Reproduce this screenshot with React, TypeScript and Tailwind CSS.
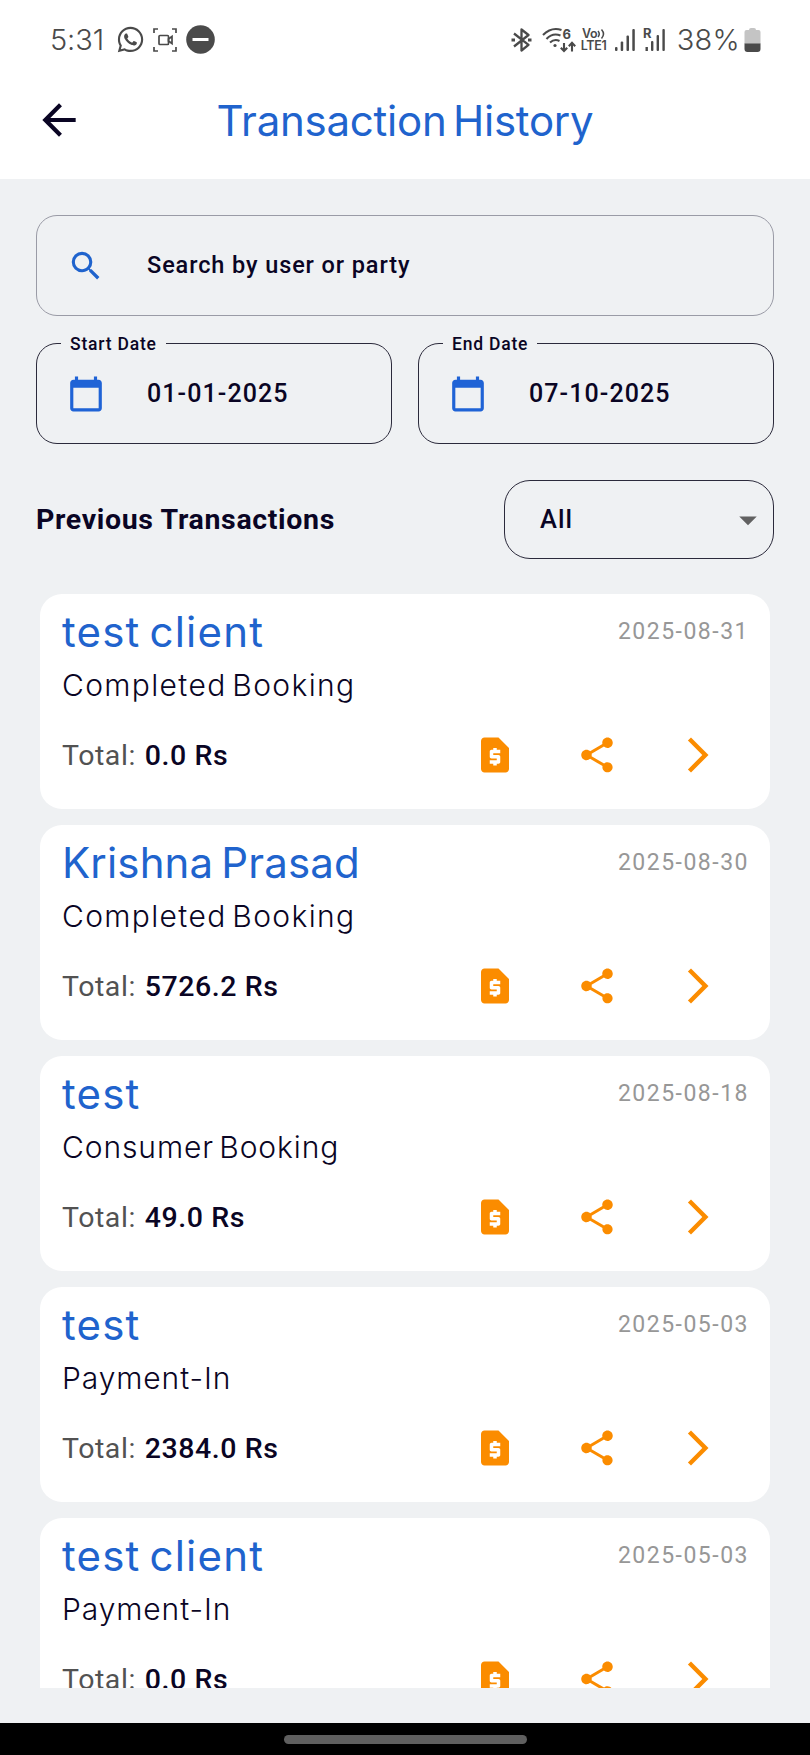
import React from 'react';
import clsx from 'clsx';
import { FaWhatsapp } from 'react-icons/fa';
import {
    MdArrowBack,
    MdArrowDropDown,
    MdArrowForwardIos,
    MdCalendarToday,
    MdRequestPage,
    MdSearch,
    MdShare,
} from 'react-icons/md';

interface ITransaction {
    party: string;
    type: string;
    total: string;
    date: string;
}

const transactions: ITransaction[] = [
    { party: 'test client', type: 'Completed Booking', total: '0.0', date: '2025-08-31' },
    { party: 'Krishna Prasad', type: 'Completed Booking', total: '5726.2', date: '2025-08-30' },
    { party: 'test', type: 'Consumer Booking', total: '49.0', date: '2025-08-18' },
    { party: 'test', type: 'Payment-In', total: '2384.0', date: '2025-05-03' },
    { party: 'test client', type: 'Payment-In', total: '0.0', date: '2025-05-03' },
];

const StatusBar: React.FC = () => (
    <div className="flex h-20 items-center pb-px pl-[50px] pr-[49px] text-[#4a4a4a]">
        <span className="w-[66px] font-[Inter,sans-serif] text-[29px] font-light leading-none tracking-[-0.1px]">5:31</span>
        <FaWhatsapp className="size-[29px]" />
        {/* screen recorder */}
        <svg className="ml-[8px] h-6 w-6" viewBox="0 0 24 24" fill="none" stroke="currentColor" strokeWidth="1.7">
            <path d="M1 5V1h4M19 1h4v4M23 19v4h-4M5 23H1v-4" />
            <rect x="6" y="7.5" width="9.5" height="9" rx="1" />
            <path d="M15.5 11l3.5-2.5v7L15.5 13z" />
        </svg>
        {/* do not disturb */}
        <svg className="ml-[9px] h-[29px] w-[29px]" viewBox="0 0 29 29">
            <circle cx="14.5" cy="14.5" r="14.3" fill="currentColor" />
            <path d="M6.5 14.5h16" stroke="#fff" strokeWidth="3" />
        </svg>

        <svg className="ml-auto h-[24px] w-[21px]" viewBox="0 0 21 24" fill="none" stroke="currentColor" strokeWidth="2.3">
            <path d="M3 5.5L17.5 16.8L10.5 22.5V1.5L17.5 7L3 18.5" strokeLinejoin="round" />
            <path d="M0.5 12h3.5M17 12h3.5" strokeWidth="3.2" />
        </svg>
        {/* wifi 6 with traffic arrows */}
        <svg className="ml-[10px] h-[26px] w-[34px] overflow-visible" viewBox="0 0 34 26" fill="none" stroke="currentColor" strokeWidth="2.1">
            <path d="M1 8Q9.5 -0.5 19.5 3M4.5 12Q10.5 5.5 18.5 8.5M8 15.5Q12.5 11.5 17.5 14" />
            <circle cx="13" cy="18.5" r="1.6" fill="currentColor" stroke="none" />
            <path d="M22 16v7.5M18.8 20.7L22 24l3.2-3.3M30 24.5V16M26.8 19.2L30 15.8l3.2 3.4" />
            <text x="20.5" y="11.5" className="font-[Inter,sans-serif] text-[13px] font-bold" fill="currentColor" stroke="none">6</text>
        </svg>
        <div className="ml-[3px] w-[30px] font-[Inter,sans-serif] text-[12.5px] font-semibold leading-[12px]">
            <div className="flex items-center justify-center">
                <span className="tracking-[-0.3px]">Vo</span>
                <svg className="h-[10px] w-[8px]" viewBox="0 0 8 10" fill="none" stroke="currentColor" strokeWidth="1.5">
                    <path d="M1 2Q3.5 5 1 8M4.5 0.5Q8.5 5 4.5 9.5" />
                </svg>
            </div>
            <div className="text-center tracking-[-0.3px]">LTE1</div>
        </div>
        <svg className="ml-[6px] h-[22px] w-[20px]" viewBox="0 0 20 22" fill="currentColor">
            <rect x="0" y="18" width="2.5" height="4" rx="1" />
            <rect x="5.7" y="12.5" width="2.5" height="9.5" rx="1" />
            <rect x="11.5" y="6.5" width="2.5" height="15.5" rx="1" />
            <rect x="17.3" y="0" width="2.5" height="22" rx="1" />
        </svg>
        <svg className="ml-[8px] h-[23px] w-[23px] overflow-visible" viewBox="0 0 23 23" fill="currentColor">
            <text x="0" y="9.5" className="font-[Inter,sans-serif] text-[13px] font-bold">R</text>
            <rect x="2.5" y="19" width="2.4" height="4" />
            <rect x="8" y="13" width="2.4" height="10" rx="1" />
            <rect x="13.6" y="7" width="2.4" height="16" rx="1" />
            <rect x="19.4" y="1" width="2.4" height="22" rx="1" />
        </svg>
        <span className="ml-[11px] font-[Inter,sans-serif] text-[29px] font-light leading-none tracking-[0.3px]">38%</span>
        <svg className="ml-[4px] h-[24px] w-[17px]" viewBox="0 0 17 24">
            <path d="M5 2a2 2 0 0 1 2-2h3a2 2 0 0 1 2 2h2.5a2 2 0 0 1 2 2v12H0.5V4a2 2 0 0 1 2-2z" fill="#c4c4c4" />
            <path d="M0.5 15.5h16V21a3 3 0 0 1-3 3h-10a3 3 0 0 1-3-3z" fill="currentColor" />
        </svg>
    </div>
);

const DateField: React.FC<{ label: string; value: string }> = ({ label, value }) => (
    <fieldset className="h-[111px] w-[356px] rounded-[21px] border border-[#2b2a3b] pl-[24px]">
        <legend className="px-[9px] pt-[2px] text-[17.5px] font-medium leading-[18px] tracking-[0.8px]">{label}</legend>
        <div className="flex h-[81px] items-center pl-[6px]">
            <MdCalendarToday className="size-[38px] text-[#1f63d6]" />
            <span className="ml-[42px] text-[25px] font-medium tracking-[1.1px]">{value}</span>
        </div>
    </fieldset>
);

const TransactionCard: React.FC<{ item: ITransaction }> = ({ item }) => (
    <div className="flex h-[215px] shrink-0 flex-col rounded-[22px] bg-white pl-[22px] pr-[21px]">
        <div className="flex justify-between">
            {/* long names get tighter letters */}
            <h3
                className={clsx(
                    'pt-[13px] font-[Inter,sans-serif] text-[42px] leading-[50px] text-[#2063cd] [word-spacing:-4px]',
                    item.party.length > 12 ? 'tracking-[0.15px]' : 'tracking-[1.2px]'
                )}
            >
                {item.party}
            </h3>
            <span className="pt-[23px] text-[23px] leading-[30px] tracking-[1.5px] text-[#979797]">{item.date}</span>
        </div>
        <p
            className={clsx(
                'mt-[10px] font-[Inter,sans-serif] text-[30px] font-light leading-[36px] [word-spacing:-4px]',
                item.type === 'Completed Booking' ? 'tracking-[1.35px]' : 'tracking-[0.9px]'
            )}
        >
            {item.type}
        </p>
        <div className="mt-[30px] flex h-[44px] items-center text-[28.5px] tracking-[0.55px]">
            <span className="pt-[2px] text-[#525252]">Total:</span>
            <span className="ml-[9px] pt-[2px] font-medium">{item.total} Rs</span>
            <div className="ml-auto mr-[30px] flex gap-[59.5px] text-[#fb8c00]">
                <MdRequestPage className="size-[42px]" />
                <MdShare className="size-[42px]" />
                <MdArrowForwardIos className="size-[42px]" />
            </div>
        </div>
    </div>
);

const TransactionHistory: React.FC = () => {
    return (
        <div className="flex h-[1755px] w-[810px] flex-col overflow-hidden bg-[#eff1f3] font-[Roboto,sans-serif] text-[#0a0524]">
            <header className="h-[179px] bg-white">
                <StatusBar />
                <div className="grid h-20 grid-cols-[100px_1fr_100px] items-center">
                    <MdArrowBack className="ml-[34px] size-[50px]" />
                    <h1 className="pt-[2px] text-center font-[Inter,sans-serif] text-[42px] leading-none tracking-[-0.25px] text-[#2063cd] [word-spacing:-5px]">Transaction History</h1>
                </div>
            </header>

            <main className="flex flex-col px-9 pt-9">
                <div className="flex h-[101px] items-center rounded-[21px] border border-[#9a9ba6] pl-[30px]">
                    <MdSearch className="size-[38px] text-[#1f63cd]" />
                    <span className="ml-[42px] text-[23.5px] font-medium tracking-[0.9px]">Search by user or party</span>
                </div>

                <div className="mt-[17px] flex justify-between">
                    <DateField label="Start Date" value="01-01-2025" />
                    <DateField label="End Date" value="07-10-2025" />
                </div>

                <div className="mt-[36px] flex h-[79px] items-center justify-between">
                    <h2 className="pt-[2px] text-[28.5px] font-bold tracking-[0.65px]">Previous Transactions</h2>
                    <div className="flex h-full w-[270px] items-center justify-between rounded-[26px] border border-[#2b2a3b] pl-[35px] pr-[4px]">
                        <span className="text-[25.5px] font-medium tracking-[1px]">All</span>
                        <MdArrowDropDown className="size-[42px] text-[#616161]" />
                    </div>
                </div>

                <div className="mx-1 mt-[35px] flex h-[1094px] flex-col gap-4 overflow-hidden">
                    {transactions.map((item, i) => (
                        <TransactionCard key={i} item={item} />
                    ))}
                </div>
            </main>

            <nav className="mt-auto flex h-8 justify-center bg-black pt-[12px]">
                <div className="h-[9px] w-[243px] rounded-full bg-[#5f5f5f]" />
            </nav>
        </div>
    );
};

export default TransactionHistory;
